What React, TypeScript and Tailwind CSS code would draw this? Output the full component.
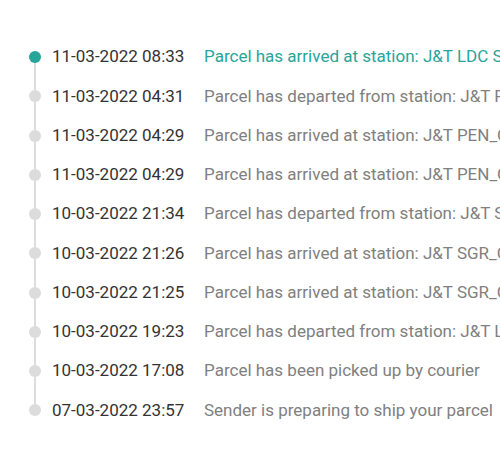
import React from "react";

const rows = [
  ["11-03-2022 08:33", "Parcel has arrived at station: J&T LDC SGR_GATEWAY"],
  ["11-03-2022 04:31", "Parcel has departed from station: J&T PEN_GATEWAY"],
  ["11-03-2022 04:29", "Parcel has arrived at station: J&T PEN_GATEWAY"],
  ["11-03-2022 04:29", "Parcel has arrived at station: J&T PEN_GATEWAY"],
  ["10-03-2022 21:34", "Parcel has departed from station: J&T SGR_GATEWAY"],
  ["10-03-2022 21:26", "Parcel has arrived at station: J&T SGR_GATEWAY"],
  ["10-03-2022 21:25", "Parcel has arrived at station: J&T SGR_GATEWAY"],
  ["10-03-2022 19:23", "Parcel has departed from station: J&T LDC SGR001"],
  ["10-03-2022 17:08", "Parcel has been picked up by courier"],
  ["07-03-2022 23:57", "Sender is preparing to ship your parcel"],
];

export default function App() {
  return (
    <div
      className="w-[500px] h-[456px] bg-white overflow-hidden pt-[37.5px]"
      style={{ fontFamily: "Roboto, 'Noto Sans', sans-serif" }}
    >
      <div className="relative pl-[29px]">
        <div className="absolute left-[34px] top-[20px] bottom-[20px] w-[2px] bg-[#dddddd]" />
        {rows.map(([d, t], i) => (
          <div key={i} className="relative flex items-center h-[39.25px] whitespace-nowrap">
            <div
              className={
                i === 0
                  ? "w-[12px] h-[12px] rounded-full bg-[#26a69a] shrink-0"
                  : "w-[12px] h-[12px] rounded-full bg-[#dcdcdc] shrink-0"
              }
            />
            <div className="ml-[11px] w-[152px] shrink-0 text-[17px] text-[#333333]">{d}</div>
            <div
              className={
                i === 0 ? "text-[17px] text-[#26a69a]" : "text-[17px] text-[#808080]"
              }
            >
              {t}
            </div>
          </div>
        ))}
      </div>
    </div>
  );
}
